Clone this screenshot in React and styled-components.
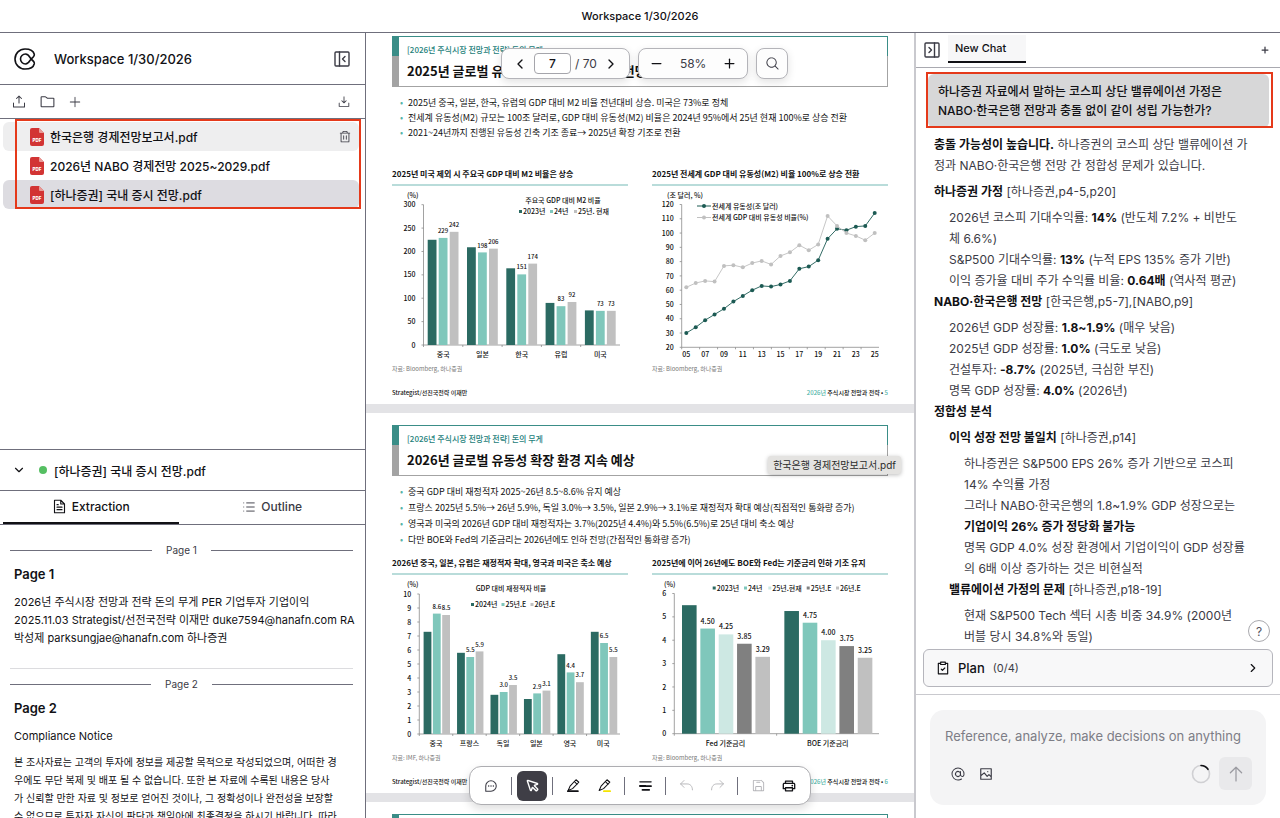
import React from "react";
import styled, { createGlobalStyle } from "styled-components";
import {
  PiUploadSimple,
  PiFolderSimple,
  PiPlus,
  PiDownloadSimple,
  PiTrash,
  PiCursorBold,
  PiFloppyDisk,
  PiPrinterBold,
  PiMagnifyingGlass,
  PiAt,
  PiArrowUp,
} from "react-icons/pi";
import { ChevronDown, ChevronLeft, ChevronRight, List, Minus, Plus } from "lucide-react";

const UI_FONT = `Inter, "Noto Sans CJK KR", sans-serif`;
const DOC_FONT = `"Noto Sans CJK KR", "Noto Sans", sans-serif`;

const c = {
  ink: "#111115",
  soft: "#3b3b45",
  line: "#6f6f7c",
  pale: "#c9c9ce",
  red: "#e5391a",
  teal: "#3a8d87",
};

const GlobalStyle = createGlobalStyle`
  * { box-sizing: border-box; }
  body { margin: 0; background: #fff; color: ${c.ink}; font-family: ${UI_FONT}; }
  button, input, textarea { font: inherit; color: inherit; }
  h1, h2, h3, p, ul { margin: 0; padding: 0; }
  ul { list-style: none; }
`;

/* ---------- shared parts ---------- */

const IconButton = styled.button`
  display: inline-flex;
  align-items: center;
  justify-content: center;
  width: ${(p) => p.$size || 20}px;
  height: ${(p) => p.$size || 20}px;
  padding: 0;
  border: 0;
  border-radius: 6px;
  background: ${(p) => p.$bg || "transparent"};
  color: ${(p) => p.$color || c.soft};
  cursor: pointer;
  flex: none;
`;

const Shell = styled.div`
  height: 100vh;
  display: grid;
  grid-template-rows: auto minmax(0, 1fr);
`;

const TitleBar = styled.header`
  height: 33px;
  display: flex;
  align-items: center;
  justify-content: center;
  border-bottom: 1px solid ${c.line};
  font-size: 11px;
  font-weight: 500;
`;

const Columns = styled.div`
  display: grid;
  grid-template-columns: 366px minmax(0, 1fr) 366px;
  min-height: 0;
`;

/* ---------- left panel ---------- */

const Sidebar = styled.aside`
  display: flex;
  flex-direction: column;
  min-height: 0;
  border-right: 1px solid ${c.line};
  overflow: hidden;
`;

const Brand = styled.div`
  display: flex;
  align-items: center;
  gap: 18px;
  height: 52px;
  padding: 0 13px 0 14px;
  border-bottom: 1px solid ${c.line};
  flex: none;
`;

const BrandName = styled.h1`
  flex: 1;
  font-size: 13px;
  font-weight: 500;
`;

const FileTools = styled.div`
  display: flex;
  align-items: center;
  gap: 8px;
  height: 34px;
  padding: 0 11px 0 9px;
  border-bottom: 1px solid ${c.line};
  flex: none;
`;

const Spacer = styled.span`
  flex: 1;
`;

const FilePane = styled.div`
  flex: 1;
  min-height: 0;
`;

const FileList = styled.ul`
  position: relative;
  padding: 3px 6px 0 3px !important;
`;

const Highlight = styled.span`
  position: absolute;
  inset: ${(p) => p.$inset};
  border: ${(p) => p.$width}px solid ${c.red};
  pointer-events: none;
`;

const FileRow = styled.li`
  display: flex;
  align-items: center;
  gap: 6px;
  height: 29px;
  padding: 0 4px 0 27px;
  border-radius: 6px;
  background: ${(p) => p.$bg || "transparent"};
  font-size: 12px;
  font-weight: 500;
  white-space: nowrap;
`;

const Detail = styled.section`
  flex: 0 0 47%;
  min-height: 0;
  display: flex;
  flex-direction: column;
  border-top: 1px solid ${c.line};
`;

const DetailHead = styled.div`
  display: flex;
  align-items: center;
  gap: 7px;
  height: 41px;
  padding-left: 9px;
  border-bottom: 1px solid ${c.line};
  font-size: 12px;
  font-weight: 500;
  flex: none;
`;

const Dot = styled.span`
  width: 8px;
  height: 8px;
  margin-left: 3px;
  border-radius: 50%;
  background: #55bf62;
`;

const Tabs = styled.div`
  display: grid;
  grid-template-columns: 1fr 1fr;
  height: 34px;
  padding: 0 3px;
  border-bottom: 1px solid ${c.line};
  flex: none;
`;

const Tab = styled.button`
  display: flex;
  align-items: center;
  justify-content: center;
  gap: 5px;
  padding: 0;
  border: 0;
  border-bottom: 2px solid ${(p) => (p.$active ? c.ink : "transparent")};
  margin-right: ${(p) => (p.$active ? "4px" : "0")};
  background: none;
  color: ${(p) => (p.$active ? c.ink : c.soft)};
  font-size: 12px;
  font-weight: 500;
`;

const Extract = styled.div`
  flex: 1;
  min-height: 0;
  overflow: hidden;
  padding: 16px 12px 0 10px;
`;

const PageMark = styled.div`
  display: flex;
  align-items: center;
  gap: 14px;
  margin-top: ${(p) => (p.$next ? "6px" : "0")};
  font-size: 10px;
  line-height: 18px;
  color: ${c.soft};
  &::before,
  &::after {
    content: "";
    flex: 1;
    border-top: 1px solid ${c.line};
  }
`;

const ExtractTitle = styled.h2`
  margin: 5px 4px 9px;
  font-size: 13px;
  line-height: 20px;
  font-weight: 600;
`;

const ExtractText = styled.p`
  margin: 0 4px 8px;
  font-size: ${(p) => (p.$latin ? 11 : 10)}px;
  line-height: 18px;
  white-space: nowrap;
`;

const Rule = styled.hr`
  margin: 21px 0 0;
  border: 0;
  border-top: 1px solid #dcdcdf;
`;

/* ---------- document viewer ---------- */

const Viewer = styled.main`
  position: relative;
  min-width: 0;
  overflow: hidden;
  background: #e3e3e6;
`;

const Sheets = styled.div`
  display: flex;
  flex-direction: column;
  gap: 9px;
  margin-top: -9px;
`;

const Sheet = styled.article`
  height: 380px;
  padding: 12px 26px 0;
  background: #fff;
  font-family: ${DOC_FONT};
  color: #111;
  flex: none;
`;

const Banner = styled.header`
  display: grid;
  grid-template-rows: 20px 31px;
  white-space: nowrap;
`;

const Kicker = styled.p`
  padding: 4px 0 0 8px !important;
  border: 1px solid ${c.teal};
  border-bottom: 0;
  border-left-width: 7px;
  color: #23807a;
  font-size: 8px;
  line-height: 18px;
  font-weight: 500;
`;

const Headline = styled.h2`
  padding-left: 8px !important;
  border: 1px solid #a3a3a3;
  border-top: 0;
  border-left-width: 7px;
  font-size: 13px;
  line-height: 30px;
  font-weight: 700;
`;

const Bullets = styled.ul`
  height: 79px;
  padding: 8px 0 0 8px !important;
  font-size: 9px;
  line-height: ${(p) => p.$line}px;
  white-space: nowrap;
  li {
    display: flex;
    gap: 5px;
  }
  li::before {
    content: "•";
    color: #57b3a7;
  }
`;

const Charts = styled.div`
  display: grid;
  grid-template-columns: 1fr 1fr;
  gap: 24px;
`;

const Figure = styled.figure`
  margin: 0;
  min-width: 0;
  h3 {
    padding-bottom: 2px;
    border-bottom: 2px solid #b9dcda;
    font-size: 8px;
    line-height: 16px;
    font-weight: 700;
    white-space: nowrap;
  }
  svg {
    display: block;
    width: 100%;
    height: 175px;
    font-family: ${DOC_FONT};
  }
  figcaption {
    padding-top: 3px;
    font-size: 6px;
    line-height: 10px;
    color: #777;
  }
`;

const Footer = styled.footer`
  display: flex;
  justify-content: space-between;
  margin-top: 12px;
  font-size: 6px;
  line-height: 14px;
  font-weight: 500;
  b {
    color: #4fb3a6;
    font-weight: 500;
  }
`;

const TopTools = styled.div`
  position: absolute;
  top: 15px;
  left: 135px;
  display: flex;
  gap: 8px;
`;

const Pill = styled.div`
  display: flex;
  align-items: center;
  gap: ${(p) => p.$gap || 0}px;
  height: 31px;
  padding: 0 ${(p) => p.$pad || 8}px;
  border: 1px solid #b4b4b9;
  border-radius: 8px;
  background: #fdfdfd;
  box-shadow: 0 3px 8px #0000001f;
  font-size: 12px;
  color: ${c.soft};
`;

const PageInput = styled.input`
  width: 37px;
  height: 21px;
  padding: 0;
  border: 1px solid #a5a5ab;
  border-radius: 4px;
  background: #fff;
  color: ${c.ink};
  text-align: center;
  font-size: 12px;
  font-weight: 500;
`;

const BottomTools = styled.div`
  position: absolute;
  left: 50%;
  bottom: 13px;
  transform: translateX(-50%);
  display: flex;
  align-items: center;
  gap: 1px;
  height: 39px;
  padding: 0 6px;
  border: 1px solid #adadb1;
  border-radius: 12px;
  background: #fff;
  box-shadow: 0 4px 10px #00000022;
`;

const Split = styled.span`
  width: 1px;
  height: 18px;
  margin: 0 4px;
  background: ${c.line};
`;

const Tip = styled.div`
  position: absolute;
  right: 13px;
  top: 423px;
  padding: 0 5px;
  border-radius: 3px;
  background: #e4e3e1;
  box-shadow: 0 1px 4px #00000044;
  font-size: 10px;
  line-height: 18px;
  color: #2b2b2b;
`;

/* ---------- chat ---------- */

const Chat = styled.aside`
  position: relative;
  display: flex;
  flex-direction: column;
  min-height: 0;
  border-left: 2px solid ${c.pale};
`;

const ChatHead = styled.div`
  display: flex;
  align-items: center;
  gap: 6px;
  height: 35px;
  padding: 0 5px 0 6px;
  border-bottom: 1px solid #a9a9b0;
  flex: none;
`;

const ChatTab = styled.button`
  width: 78px;
  height: 28px;
  margin-bottom: 2px;
  padding: 0 7px;
  border: 0;
  border-bottom: 2px solid ${c.ink};
  background: #f7f7f8;
  text-align: left;
  font-size: 11px;
  font-weight: 500;
`;

const Thread = styled.div`
  flex: 1;
  min-height: 0;
  overflow: hidden;
  padding: 6px 11px 0 12px;
`;

const Question = styled.p`
  position: relative;
  padding: 8px 10px !important;
  border-radius: 6px;
  background: #d7d7d8;
  font-size: 12px;
  line-height: 19px;
  font-weight: 500;
  white-space: nowrap;
`;

const Answer = styled.div`
  padding: 6px 0 0 6px;
  font-size: 12px;
  line-height: 21px;
  color: ${c.soft};
  white-space: nowrap;
  strong {
    color: ${c.ink};
    font-weight: 700;
  }
  > p {
    margin-bottom: 5px;
  }
  ul {
    margin-top: 5px;
    padding-left: 15px;
  }
  > ul {
    margin-top: 0;
    padding-left: 0;
  }
`;

const Help = styled.button`
  position: absolute;
  right: 10px;
  bottom: 176px;
  width: 22px;
  height: 22px;
  padding: 0;
  border: 1px solid #a9a9ae;
  border-radius: 50%;
  background: #fff;
  color: #55555e;
  font-size: 12px;
`;

const Plan = styled.button`
  display: flex;
  align-items: center;
  gap: 8px;
  height: 38px;
  margin: 0 7px 7px;
  padding: 0 12px;
  border: 1px solid #b5b5bc;
  border-radius: 6px;
  background: #f8f8f9;
  font-size: 13px;
  font-weight: 500;
  flex: none;
  small {
    font-size: 11px;
    font-weight: 400;
    color: ${c.soft};
  }
`;

const Composer = styled.form`
  padding: 15px 14px 13px;
  border-top: 1px solid ${c.pale};
  flex: none;
`;

const ComposerBox = styled.div`
  height: 95px;
  padding: 16px 14px 0 15px;
  border-radius: 14px;
  background: #f4f4f5;
`;

const Prompt = styled.textarea`
  display: block;
  width: 100%;
  height: 20px;
  padding: 0;
  border: 0;
  background: none;
  resize: none;
  outline: 0;
  overflow: hidden;
  font-size: 13px;
  line-height: 20px;
  &::placeholder {
    color: #7d7d86;
    opacity: 1;
  }
`;

const ComposerTools = styled.div`
  display: flex;
  align-items: center;
  gap: 8px;
  margin-top: 11px;
  padding-left: 3px;
`;

/* ---------- icons ---------- */

const Svg = ({ size = 16, box = 24, width = 1.8, children }) => (
  <svg
    width={size}
    height={size}
    viewBox={`0 0 ${box} ${box}`}
    fill="none"
    stroke="currentColor"
    strokeWidth={width}
    strokeLinecap="round"
    strokeLinejoin="round"
    aria-hidden="true"
  >
    {children}
  </svg>
);

const Logo = () => (
  <Svg size={22} box={22} width={1.6}>
    <path d="M17 11C19 9.5 20.6 8.2 20.3 6.3C19.5 3 15.5 1 11 1A10 10 0 0 0 11 21C15.5 21 19.5 19 20.3 15.7C20.6 13.8 19 12.5 17 11C15.5 8.5 14.5 6 11.5 6A5 5 0 0 0 11.5 16C14.5 16 15.5 13.5 17 11Z" />
  </Svg>
);

const PanelIcon = ({ flip }) => (
  <Svg size={16} box={16} width={1.4}>
    <g transform={flip ? "matrix(-1 0 0 1 16 0)" : undefined}>
      <rect x="1" y="1" width="14" height="14" rx="1" />
      <path d="M5.5 1V15M11 5.5L8.5 8L11 10.5" />
    </g>
  </Svg>
);

const PdfIcon = () => (
  <svg width="14" height="18" viewBox="0 0 14 18" aria-hidden="true">
    <path d="M2 0H9L14 5V16A2 2 0 0 1 12 18H2A2 2 0 0 1 0 16V2A2 2 0 0 1 2 0Z" fill="#d23434" />
    <path d="M9 0L14 5H10A1 1 0 0 1 9 4Z" fill="#e99a96" />
    <text x="7" y="13.5" fontSize="4.5" fontWeight="800" fill="#fff" textAnchor="middle" fontFamily="Inter">
      PDF
    </text>
  </svg>
);

const PageIcon = () => (
  <Svg size={15}>
    <path d="M14 2H4V22H20V8ZM14 2V8H20M8 9H10M8 13H16M8 17H16" />
  </Svg>
);

const ChatDots = () => (
  <Svg size={14}>
    <path d="M3 21V12A9 9 0 1 1 12 21Z" />
    <path d="M8 12H8.1M12 12H12.1M16 12H16.1" strokeWidth="2.4" />
  </Svg>
);

const Marker = ({ ink }) => (
  <Svg size={15} width={1.7}>
    <path d={ink ? "M11 21H21" : "M3 21H19"} stroke={ink || "currentColor"} strokeWidth="2.8" />
    <path d="M3.5 20L6.5 13L16 2.8L20.5 6.8L10.5 17Z" />
    <path d="M13.5 5.8L17.5 9.8" />
  </Svg>
);

const LinesIcon = () => (
  <Svg size={15} width={2}>
    <path d="M3 6H21M3 12H12" />
    <path d="M3 13H21M7 19H18" strokeWidth="2.6" />
  </Svg>
);

const TurnArrow = ({ forward }) => (
  <Svg size={15} width={1.5}>
    <g transform={forward ? "matrix(-1 0 0 1 24 0)" : undefined}>
      <path d="M8 4L2.5 9.5L8 15M2.5 9.5H13C18 9.5 21.5 13 21.5 19" />
    </g>
  </Svg>
);

const ClipCheck = () => (
  <Svg size={14} width={2}>
    <path d="M8 4H4V22H20V4H16M8 2H16V6H8ZM9 14L11 16L15 12" />
  </Svg>
);

const PictureIcon = () => (
  <Svg size={14} width={2}>
    <path d="M3 3H21V21H3ZM3 15L9 10L14 16L17 13L21 17M15 8H15.1" />
  </Svg>
);

const Ring = () => (
  <Svg size={20} box={20} width={1.6}>
    <circle cx="10" cy="10" r="8.5" stroke="#d0d0d3" />
    <path d="M10 1.5A8.5 8.5 0 0 1 17 5.3" />
  </Svg>
);

/* ---------- charts ---------- */

const DARK = "#2b6a62";
const MINT = "#7fc7bb";
const PALE = "#cde8e3";
const MID = "#808080";
const GRAY = "#c0c0c0";

const Label = ({ x, y, anchor = "middle", size = 7, children }) => (
  <text x={x} y={y + 2.6} fontSize={size} fontWeight="500" textAnchor={anchor} fill="#111">
    {children}
  </text>
);

function Axes({ left, right, top, bottom, ticks, groups, unit, unitX }) {
  const step = (bottom - top) / (ticks.length - 1);
  const span = (right - left) / groups;
  return (
    <g>
      <Label x={unitX} y={9.5} anchor="start">
        {unit}
      </Label>
      <path
        d={`M${left} ${top}V${bottom}H${right}${ticks
          .map((_, i) => `M${left - 2} ${bottom - i * step}H${left}`)
          .join("")}${Array.from({ length: groups }, (_, i) => `M${left + i * span} ${bottom}v2`).join("")}`}
        stroke="#8a8a8a"
        strokeWidth="0.8"
        fill="none"
      />
      {ticks.map((t, i) => (
        <Label key={t} x={left - 8} y={bottom - i * step} anchor="end">
          {t}
        </Label>
      ))}
    </g>
  );
}

function BarChart({ frame, max, ticks, colors, groups, bar, pitch, inset, title, legend, labelSize = 7, digits = 0, unitX = 15 }) {
  const { left, right, top, bottom } = frame;
  const span = (right - left) / groups.length;
  return (
    <svg viewBox="0 0 236 175" role="img" aria-label={title ? title.text : "기준금리"}>
      <Axes {...frame} ticks={ticks} groups={groups.length} unit="(%)" unitX={unitX} />
      {title && (
        <Label x={title.x} y={title.y}>
          {title.text}
        </Label>
      )}
      {legend.items.map(([x, text], i) => (
        <g key={text}>
          <rect x={x} y={legend.y - 1.5} width="3" height="3" fill={colors[i]} />
          <Label x={x + 4} y={legend.y} anchor="start">
            {text}
          </Label>
        </g>
      ))}
      {groups.map(([name, values], g) => (
        <g key={name}>
          <Label x={left + span * (g + 0.5)} y={168}>
            {name}
          </Label>
          {values.map((v, i) => {
            const x = left + span * g + inset + pitch * i;
            const h = ((bottom - top) * v) / max;
            return (
              <g key={i}>
                <rect x={x} y={bottom - h} width={bar} height={h} fill={colors[i]} />
                {i > 0 && (
                  <Label x={x + bar / 2} y={bottom - h - 7.5} size={labelSize}>
                    {v.toFixed(digits)}
                  </Label>
                )}
              </g>
            );
          })}
        </g>
      ))}
    </svg>
  );
}

const liquidity = [30, 34, 39, 43, 47, 52, 56, 60, 63, 62.5, 64, 66.5, 75, 76.5, 81, 96, 103, 102, 104.5, 105, 114];
const ratio = [62, 65, 66.5, 66, 77, 77.5, 76, 79, 80.5, 78, 84, 86.5, 91.5, 88, 92, 112, 105, 100, 98, 95, 100];

function LineChart() {
  const frame = { left: 29.7, right: 227, top: 18.5, bottom: 161.3 };
  const px = (i) => 34.3 + i * 9.42;
  const py = (v) => frame.bottom - (v - 20) * 1.428;
  const series = [
    [liquidity, "#1c5a53", "전세계 유동성(조 달러)", 20],
    [ratio, GRAY, "전세계 GDP 대비 유동성 비율(%)", 31.5],
  ];
  return (
    <svg viewBox="0 0 236 175" role="img" aria-label="전세계 유동성">
      <Axes {...frame} ticks={[20, 30, 40, 50, 60, 70, 80, 90, 100, 110, 120]} groups={11} unit="(조 달러, %)" unitX={15} />
      {series.map(([data, color, name, y]) => (
        <g key={name}>
          <path d={`M45 ${y}H59`} stroke={color} />
          <circle cx="52" cy={y} r="2" fill={color} />
          <Label x={60} y={y} anchor="start">
            {name}
          </Label>
          <polyline points={data.map((v, i) => `${px(i)},${py(v)}`).join(" ")} fill="none" stroke={color} strokeWidth="0.9" />
          {data.map((v, i) => (
            <circle key={i} cx={px(i)} cy={py(v)} r="2" fill={color} />
          ))}
        </g>
      ))}
      {["05", "07", "09", "11", "13", "15", "17", "19", "21", "23", "25"].map((t, i) => (
        <Label key={t} x={px(i * 2)} y={168.5}>
          {t}
        </Label>
      ))}
    </svg>
  );
}

const PageHead = ({ title }) => (
  <Banner>
    <Kicker>{title && "[2026년 주식시장 전망과 전략] 돈의 무게"}</Kicker>
    <Headline>{title}</Headline>
  </Banner>
);

const PageFoot = ({ no }) => (
  <Footer>
    <span>Strategist/선진국전략 이재만</span>
    <span>
      <b>2026년</b> 주식시장 전망과 전략 • <b>{no}</b>
    </span>
  </Footer>
);

const files = [
  ["한국은행 경제전망보고서.pdf", "#eeeeef", true],
  ["2026년 NABO 경제전망 2025~2029.pdf"],
  ["[하나증권] 국내 증시 전망.pdf", "#dddce1"],
];

export default function App() {
  return (
    <Shell>
      <GlobalStyle />
      <TitleBar>Workspace 1/30/2026</TitleBar>
      <Columns>
        <Sidebar>
          <Brand>
            <Logo />
            <BrandName>Workspace 1/30/2026</BrandName>
            <IconButton aria-label="Collapse sidebar">
              <PanelIcon />
            </IconButton>
          </Brand>
          <FileTools>
            <IconButton aria-label="Upload">
              <PiUploadSimple size={16} />
            </IconButton>
            <IconButton aria-label="New folder">
              <PiFolderSimple size={17} />
            </IconButton>
            <IconButton aria-label="Add">
              <PiPlus size={14} />
            </IconButton>
            <Spacer />
            <IconButton aria-label="Download">
              <PiDownloadSimple size={14} />
            </IconButton>
          </FileTools>
          <FilePane>
            <FileList>
              {files.map(([name, bg, trash]) => (
                <FileRow key={name} $bg={bg}>
                  <PdfIcon />
                  {name}
                  {trash && (
                    <>
                      <Spacer />
                      <IconButton aria-label="Delete file">
                        <PiTrash size={14} />
                      </IconButton>
                    </>
                  )}
                </FileRow>
              ))}
              <Highlight $inset="0 4px 0 15px" $width={2} />
            </FileList>
          </FilePane>
          <Detail>
            <DetailHead>
              <IconButton aria-label="Collapse document" $color={c.ink}>
                <ChevronDown size={14} />
              </IconButton>
              <Dot />
              [하나증권] 국내 증시 전망.pdf
            </DetailHead>
            <Tabs role="tablist">
              <Tab role="tab" aria-selected="true" $active>
                <PageIcon />
                Extraction
              </Tab>
              <Tab role="tab" aria-selected="false">
                <List size={14} strokeWidth={1.6} />
                Outline
              </Tab>
            </Tabs>
            <Extract>
              <PageMark>Page 1</PageMark>
              <ExtractTitle>Page 1</ExtractTitle>
              <ExtractText $latin>
                2026년 주식시장 전망과 전략 돈의 무게 PER 기업투자 기업이익
                <br />
                2025.11.03 Strategist/선전국전략 이재만 duke7594@hanafn.com RA
                <br />
                박성제 parksungjae@hanafn.com 하나증권
              </ExtractText>
              <Rule />
              <PageMark $next>Page 2</PageMark>
              <ExtractTitle>Page 2</ExtractTitle>
              <ExtractText $latin>Compliance Notice</ExtractText>
              <ExtractText>
                본 조사자료는 고객의 투자에 정보를 제공할 목적으로 작성되었으며, 어떠한 경
                <br />
                우에도 무단 복제 및 배포 될 수 없습니다. 또한 본 자료에 수록된 내용은 당사
                <br />
                가 신뢰할 만한 자료 및 정보로 얻어진 것이나, 그 정확성이나 완전성을 보장할
                <br />
                수 없으므로 투자자 자신의 판단과 책임아에 최종결정을 하시기 바랍니다. 따라
              </ExtractText>
            </Extract>
          </Detail>
        </Sidebar>

        <Viewer>
          <Sheets>
            <Sheet>
              <PageHead title="2025년 글로벌 유동성 확장 환경 진행과 전망" />
              <Bullets $line={15}>
                <li>2025년 중국, 일본, 한국, 유럽의 GDP 대비 M2 비율 전년대비 상승. 미국은 73%로 정체</li>
                <li>전세계 유동성(M2) 규모는 100조 달러로, GDP 대비 유동성(M2) 비율은 2024년 95%에서 25년 현재 100%로 상승 전환</li>
                <li>2021~24년까지 진행된 유동성 긴축 기조 종료→ 2025년 확장 기조로 전환</li>
              </Bullets>
              <Charts>
                <Figure>
                  <h3>2025년 미국 제외 시 주요국 GDP 대비 M2 비율은 상승</h3>
                  <BarChart
                    frame={{ left: 31.5, right: 228, top: 18.7, bottom: 159 }}
                    max={300}
                    ticks={[0, 50, 100, 150, 200, 250, 300]}
                    colors={[DARK, MINT, GRAY]}
                    bar={8.8}
                    pitch={11}
                    inset={4.2}
                    labelSize={6}
                    title={{ x: 171, y: 14, text: "주요국 GDP 대비 M2 비율" }}
                    legend={{ y: 25.5, items: [[127, "2023년"], [158, "24년"], [182, "25년. 현재"]] }}
                    groups={[
                      ["중국", [225, 229, 242]],
                      ["일본", [209, 198, 206]],
                      ["한국", [164, 151, 174]],
                      ["유럽", [90, 83, 92]],
                      ["미국", [74, 73, 73]],
                    ]}
                  />
                  <figcaption>자료: Bloomberg, 하나증권</figcaption>
                </Figure>
                <Figure>
                  <h3>2025년 전세계 GDP 대비 유동성(M2) 비율 100%로 상승 전환</h3>
                  <LineChart />
                  <figcaption>자료: Bloomberg, 하나증권</figcaption>
                </Figure>
              </Charts>
              <PageFoot no={5} />
            </Sheet>

            <Sheet>
              <PageHead title="2026년 글로벌 유동성 확장 환경 지속 예상" />
              <Bullets $line={16}>
                <li>중국 GDP 대비 재정적자 2025~26년 8.5~8.6% 유지 예상</li>
                <li>프랑스 2025년 5.5%→ 26년 5.9%, 독일 3.0%→ 3.5%, 일본 2.9%→ 3.1%로 재정적자 확대 예상(직접적인 통화량 증가)</li>
                <li>영국과 미국의 2026년 GDP 대비 재정적자는 3.7%(2025년 4.4%)와 5.5%(6.5%)로 25년 대비 축소 예상</li>
                <li>다만 BOE와 Fed의 기준금리는 2026년에도 인하 전망(간접적인 통화량 증가)</li>
              </Bullets>
              <Charts>
                <Figure>
                  <h3>2026년 중국, 일본, 유럽은 재정적자 확대, 영국과 미국은 축소 예상</h3>
                  <BarChart
                    frame={{ left: 27.3, right: 228, top: 19, bottom: 159 }}
                    max={10}
                    digits={1}
                    ticks={[0, 1, 2, 3, 4, 5, 6, 7, 8, 9, 10]}
                    colors={[DARK, MINT, GRAY]}
                    bar={7.8}
                    pitch={9.3}
                    inset={4.3}
                    labelSize={6}
                    title={{ x: 119, y: 13, text: "GDP 대비 재정적자 비율" }}
                    legend={{ y: 29.5, items: [[79, "2024년"], [109.5, "25년.E"], [138.5, "26년.E"]] }}
                    groups={[
                      ["중국", [7.3, 8.6, 8.5]],
                      ["프랑스", [5.8, 5.5, 5.9]],
                      ["독일", [2.8, 3.0, 3.5]],
                      ["일본", [2.5, 2.9, 3.1]],
                      ["영국", [5.7, 4.4, 3.7]],
                      ["미국", [7.3, 6.5, 5.5]],
                    ]}
                  />
                  <figcaption>자료: IMF, 하나증권</figcaption>
                </Figure>
                <Figure>
                  <h3>2025년에 이어 26년에도 BOE와 Fed는 기준금리 인하 기조 유지</h3>
                  <BarChart
                    frame={{ left: 22.3, right: 227, top: 18.5, bottom: 158.7 }}
                    max={6}
                    digits={2}
                    unitX={12}
                    ticks={[0, 1, 2, 3, 4, 5, 6]}
                    colors={[DARK, MINT, PALE, MID, GRAY]}
                    bar={14.6}
                    pitch={18.35}
                    inset={7.7}
                    legend={{
                      y: 13,
                      items: [[60.7, "2023년"], [92, "24년"], [116.3, "25년.현재"], [154.7, "25년.E"], [184, "26년.E"]],
                    }}
                    groups={[
                      ["Fed 기준금리", [5.5, 4.5, 4.25, 3.85, 3.29]],
                      ["BOE 기준금리", [5.25, 4.75, 4.0, 3.75, 3.25]],
                    ]}
                  />
                  <figcaption>자료: Bloomberg, 하나증권</figcaption>
                </Figure>
              </Charts>
              <PageFoot no={6} />
            </Sheet>

            <Sheet>
              <PageHead title="" />
            </Sheet>
          </Sheets>

          <TopTools>
            <Pill $gap={4}>
              <IconButton aria-label="Previous page" $color={c.ink}>
                <ChevronLeft size={16} />
              </IconButton>
              <PageInput aria-label="Page" defaultValue="7" />
              <span>/ 70</span>
              <IconButton aria-label="Next page" $color={c.ink}>
                <ChevronRight size={16} />
              </IconButton>
            </Pill>
            <Pill $gap={13}>
              <IconButton aria-label="Zoom out" $color={c.ink}>
                <Minus size={15} />
              </IconButton>
              <span>58%</span>
              <IconButton aria-label="Zoom in" $color={c.ink}>
                <Plus size={15} />
              </IconButton>
            </Pill>
            <Pill $pad={5}>
              <IconButton aria-label="Search">
                <PiMagnifyingGlass size={15} />
              </IconButton>
            </Pill>
          </TopTools>

          <Tip role="tooltip">한국은행 경제전망보고서.pdf</Tip>

          <BottomTools role="toolbar">
            <IconButton aria-label="Comment" $size={30}>
              <ChatDots />
            </IconButton>
            <Split />
            <IconButton aria-label="Select" $size={30} $bg="#3f3e46" $color="#fff">
              <PiCursorBold size={15} />
            </IconButton>
            <Split />
            <IconButton aria-label="Draw" $size={30} $color={c.ink}>
              <Marker />
            </IconButton>
            <IconButton aria-label="Highlight" $size={30} $color={c.ink}>
              <Marker ink="#f5e400" />
            </IconButton>
            <Split />
            <IconButton aria-label="Text lines" $size={30} $color={c.ink}>
              <LinesIcon />
            </IconButton>
            <Split />
            <IconButton aria-label="Undo" $size={30} $color="#b5b5b9">
              <TurnArrow />
            </IconButton>
            <IconButton aria-label="Redo" $size={30} $color="#b5b5b9">
              <TurnArrow forward />
            </IconButton>
            <Split />
            <IconButton aria-label="Save" $size={30} $color="#b5b5b9">
              <PiFloppyDisk size={15} />
            </IconButton>
            <IconButton aria-label="Print" $size={30} $color={c.ink}>
              <PiPrinterBold size={14} />
            </IconButton>
          </BottomTools>
        </Viewer>

        <Chat>
          <ChatHead>
            <IconButton aria-label="Collapse chat">
              <PanelIcon flip />
            </IconButton>
            <ChatTab>New Chat</ChatTab>
            <Spacer />
            <IconButton aria-label="New chat">
              <Plus size={10} strokeWidth={3} />
            </IconButton>
          </ChatHead>
          <Thread>
            <Question>
              하나증권 자료에서 말하는 코스피 상단 밸류에이션 가정은
              <br />
              NABO·한국은행 전망과 충돌 없이 같이 성립 가능한가?
              <Highlight $inset="-2px -4px 0 -2px" $width={2} />
            </Question>
            <Answer>
              <p>
                <strong>충돌 가능성이 높습니다.</strong> 하나증권의 코스피 상단 밸류에이션 가<br />
                정과 NABO·한국은행 전망 간 정합성 문제가 있습니다.
              </p>
              <ul>
                <li>
                  <strong>하나증권 가정</strong> [하나증권,p4-5,p20]
                  <ul>
                    <li>
                      2026년 코스피 기대수익률: <strong>14%</strong> (반도체 7.2% + 비반도
                      <br />체 6.6%)
                    </li>
                    <li>
                      S&amp;P500 기대수익률: <strong>13%</strong> (누적 EPS 135% 증가 기반)
                    </li>
                    <li>
                      이익 증가율 대비 주가 수익률 비율: <strong>0.64배</strong> (역사적 평균)
                    </li>
                  </ul>
                </li>
                <li>
                  <strong>NABO·한국은행 전망</strong> [한국은행,p5-7],[NABO,p9]
                  <ul>
                    <li>
                      2026년 GDP 성장률: <strong>1.8~1.9%</strong> (매우 낮음)
                    </li>
                    <li>
                      2025년 GDP 성장률: <strong>1.0%</strong> (극도로 낮음)
                    </li>
                    <li>
                      건설투자: <strong>-8.7%</strong> (2025년, 극심한 부진)
                    </li>
                    <li>
                      명목 GDP 성장률: <strong>4.0%</strong> (2026년)
                    </li>
                  </ul>
                </li>
                <li>
                  <strong>정합성 분석</strong>
                  <ul>
                    <li>
                      <strong>이익 성장 전망 불일치</strong> [하나증권,p14]
                      <ul>
                        <li>
                          하나증권은 S&amp;P500 EPS 26% 증가 기반으로 코스피
                          <br />
                          14% 수익률 가정
                        </li>
                        <li>
                          그러나 NABO·한국은행의 1.8~1.9% GDP 성장으로는
                          <br />
                          <strong>기업이익 26% 증가 정당화 불가능</strong>
                        </li>
                        <li>
                          명목 GDP 4.0% 성장 환경에서 기업이익이 GDP 성장률
                          <br />의 6배 이상 증가하는 것은 비현실적
                        </li>
                      </ul>
                    </li>
                    <li>
                      <strong>밸류에이션 가정의 문제</strong> [하나증권,p18-19]
                      <ul>
                        <li>
                          현재 S&amp;P500 Tech 섹터 시총 비중 34.9% (2000년
                          <br />
                          버블 당시 34.8%와 동일)
                        </li>
                      </ul>
                    </li>
                  </ul>
                </li>
              </ul>
            </Answer>
          </Thread>
          <Help aria-label="Help">?</Help>
          <Plan>
            <ClipCheck />
            Plan <small>(0/4)</small>
            <Spacer />
            <ChevronRight size={14} />
          </Plan>
          <Composer>
            <ComposerBox>
              <Prompt aria-label="Message" placeholder="Reference, analyze, make decisions on anything" />
              <ComposerTools>
                <IconButton type="button" aria-label="Mention">
                  <PiAt size={16} />
                </IconButton>
                <IconButton type="button" aria-label="Attach image">
                  <PictureIcon />
                </IconButton>
                <Spacer />
                <Ring />
                <IconButton type="button" aria-label="Send" $size={33} $bg="#e9e9eb" $color="#9a9aa0">
                  <PiArrowUp size={20} />
                </IconButton>
              </ComposerTools>
            </ComposerBox>
          </Composer>
        </Chat>
      </Columns>
    </Shell>
  );
}
